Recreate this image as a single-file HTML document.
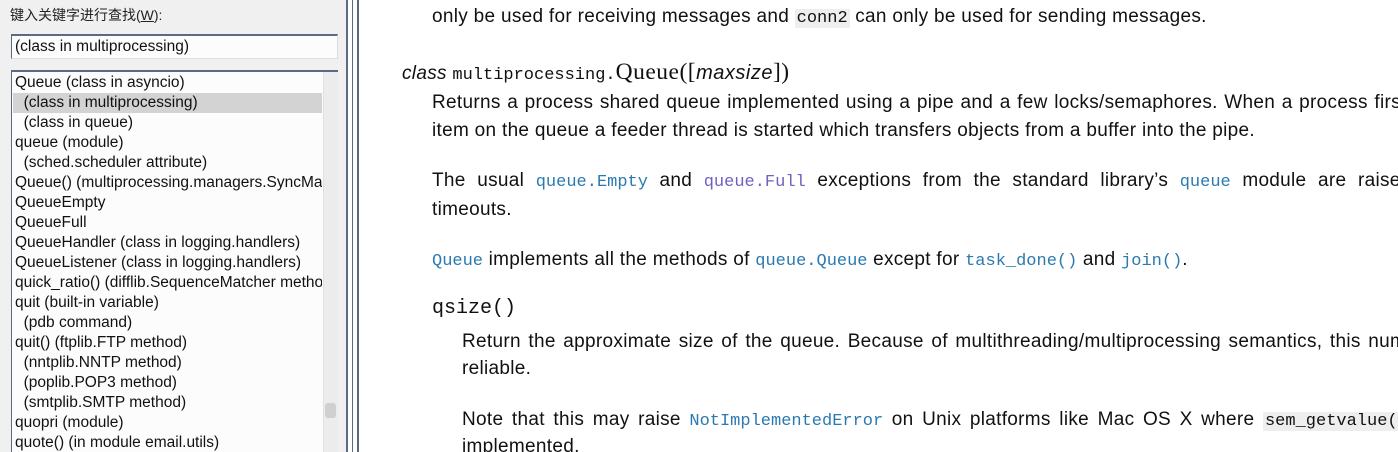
<!DOCTYPE html>
<html><head><meta charset="utf-8"><style>
*{margin:0;padding:0;box-sizing:border-box}
body{width:1398px;height:452px;overflow:hidden;position:relative;background:#fff;font-family:"Liberation Sans",Arial,sans-serif}
#left{position:absolute;left:0;top:0;width:346px;height:452px;background:#f0f0f0;overflow:hidden}
#main{position:absolute;left:359px;top:0;width:1039px;height:452px;overflow:hidden}
.lbl{position:absolute;left:10px;top:5px;font-size:14px;color:#222;font-family:"Liberation Sans","Noto Sans CJK SC",sans-serif}
.inp{position:absolute;left:11px;top:34px;width:327px;height:25px;background:#fcfcfc;border-top:2px solid #5a6a80;border-left:1px solid #5a6a80;border-right:1px solid #ddd;border-bottom:1px solid #ddd;font-size:15.5px;padding:2px 3px;color:#111}
.list{position:absolute;left:11px;top:70px;width:327px;height:390px;background:#fcfcfc;border-top:2px solid #5a6a80;border-left:1px solid #5a6a80;overflow:hidden}
.it{position:absolute;left:3px;height:20px;line-height:20px;font-size:15.5px;color:#111;white-space:nowrap;width:307px;overflow:hidden}
.sel{background:#d3d3d3;left:1px;padding-left:2px;width:309px}
.sb{position:absolute;left:311px;top:0;width:16px;height:400px;background:#ececec;border-left:1px solid #e0e0e0}
.th{position:absolute;left:313px;top:331px;width:11px;height:15px;background:#d0d0d0;border-radius:3px}
.vl{position:absolute;top:0;height:452px;background:#5a6a80}
.t{position:absolute;white-space:nowrap;font-size:19px;letter-spacing:0.3px;color:#111;line-height:24px}
code,.m{font-family:"Liberation Mono",monospace;font-size:17px;letter-spacing:0}
.a{color:#2a7ab0}.v{color:#7060c0}
.bg{background:#eee;padding:0 2px}
</style></head><body>
<div id="left">
<div class="lbl">键入关键字进行查找(<u>W</u>):</div>
<div class="inp">(class in multiprocessing)</div>
<div class="list">
<div class="sb"></div><div class="th"></div>
<div class="it" style="top:1px">Queue (class in asyncio)</div>
<div class="it sel" style="top:21px">&nbsp;&nbsp;(class in multiprocessing)</div>
<div class="it" style="top:41px">&nbsp;&nbsp;(class in queue)</div>
<div class="it" style="top:61px">queue (module)</div>
<div class="it" style="top:81px">&nbsp;&nbsp;(sched.scheduler attribute)</div>
<div class="it" style="top:101px">Queue() (multiprocessing.managers.SyncManager method)</div>
<div class="it" style="top:121px">QueueEmpty</div>
<div class="it" style="top:141px">QueueFull</div>
<div class="it" style="top:161px">QueueHandler (class in logging.handlers)</div>
<div class="it" style="top:181px">QueueListener (class in logging.handlers)</div>
<div class="it" style="top:201px">quick_ratio() (difflib.SequenceMatcher method)</div>
<div class="it" style="top:221px">quit (built-in variable)</div>
<div class="it" style="top:241px">&nbsp;&nbsp;(pdb command)</div>
<div class="it" style="top:261px">quit() (ftplib.FTP method)</div>
<div class="it" style="top:281px">&nbsp;&nbsp;(nntplib.NNTP method)</div>
<div class="it" style="top:301px">&nbsp;&nbsp;(poplib.POP3 method)</div>
<div class="it" style="top:321px">&nbsp;&nbsp;(smtplib.SMTP method)</div>
<div class="it" style="top:341px">quopri (module)</div>
<div class="it" style="top:361px">quote() (in module email.utils)</div>
</div>
</div>
<div class="vl" style="left:346px;width:2px"></div>
<div class="vl" style="left:352px;width:1px"></div>
<div class="vl" style="left:357px;width:2px"></div>

<div id="main">
<div class="t" style="left:73px;top:5px">only be used for receiving messages and <code class="bg">conn2</code> can only be used for sending messages.</div>
<div class="t" style="left:43px;top:60px"><i>class</i> <span class="m">multiprocessing.</span><span style="font-family:'Liberation Serif',serif;font-size:23.5px;letter-spacing:0.5px">Queue([<i style="font-family:'Liberation Sans',sans-serif;font-size:20px">maxsize</i>])</span></div>
<div class="t" style="left:73px;top:91px;word-spacing:1px">Returns a process shared queue implemented using a pipe and a few locks/semaphores. When a process first puts an</div>
<div class="t" style="left:73px;top:119px">item on the queue a feeder thread is started which transfers objects from a buffer into the pipe.</div>
<div class="t" style="left:73px;top:169px;word-spacing:6px">The usual <code class="a">queue.Empty</code> and <code class="v">queue.Full</code> exceptions from the standard library’s <code class="a">queue</code> module are raised to signal</div>
<div class="t" style="left:73px;top:198px">timeouts.</div>
<div class="t" style="left:73px;top:248px"><code class="a">Queue</code> implements all the methods of <code class="a">queue.Queue</code> except for <code class="a">task_done()</code> and <code class="a">join()</code>.</div>
<div class="t" style="left:73px;top:297px;font-family:'Liberation Mono',monospace;font-size:20px;letter-spacing:0">qsize()</div>
<div class="t" style="left:103px;top:330px;word-spacing:2px">Return the approximate size of the queue. Because of multithreading/multiprocessing semantics, this number is not</div>
<div class="t" style="left:103px;top:357px">reliable.</div>
<div class="t" style="left:103px;top:408px;word-spacing:3px">Note that this may raise <code class="a">NotImplementedError</code> on Unix platforms like Mac OS X where <code class="bg">sem_getvalue()</code> is not</div>
<div class="t" style="left:103px;top:435px">implemented.</div>
</div>
</body></html>
